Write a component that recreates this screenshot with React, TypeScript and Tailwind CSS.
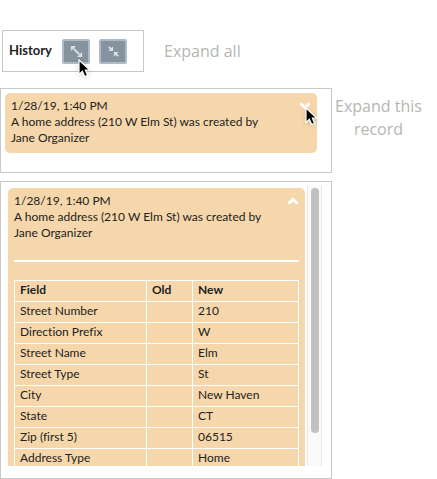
import type { ReactNode } from "react";

const rows = [
  ["Street Number", "", "210"],
  ["Direction Prefix", "", "W"],
  ["Street Name", "", "Elm"],
  ["Street Type", "", "St"],
  ["City", "", "New Haven"],
  ["State", "", "CT"],
  ["Zip (first 5)", "", "06515"],
  ["Address Type", "", "Home"],
];

function Pointer({ className }: { className: string }) {
  return (
    <svg
      className={`pointer-events-none absolute z-10 drop-shadow-sm ${className}`}
      width="13"
      height="19"
      viewBox="0 0 13 19"
      aria-hidden="true"
    >
      <path
        d="M1 1v14.5l3.4-3.2 2.3 5.3 2.9-1.2-2.2-5.2h4.6z"
        fill="#000"
        stroke="#fff"
        strokeWidth="1.2"
      />
    </svg>
  );
}

function ToolButton({ label, children }: { label: string; children: ReactNode }) {
  return (
    <button
      type="button"
      aria-label={label}
      className="flex h-[25px] w-7 items-center justify-center rounded-xs border-2 border-[#adbbc7] bg-[#86939e]"
    >
      <svg width="13" height="13" viewBox="0 0 14 14" fill="#dce2e8" stroke="#dce2e8" aria-hidden="true">
        {children}
      </svg>
    </button>
  );
}

function Chevron({ up, label }: { up?: boolean; label: string }) {
  return (
    <button type="button" aria-label={label} className="mt-1 h-2 w-3 shrink-0">
      <svg className="block" width="12" height="8" viewBox="0 0 12 8" fill="none" stroke="#fff" strokeWidth="3" aria-hidden="true">
        <path d={up ? "M1.5 6.7 6 2.3l4.5 4.4" : "M1.5 1.3 6 5.7l4.5-4.4"} />
      </svg>
    </button>
  );
}

function Summary() {
  return (
    <p className="min-w-0 flex-1">
      <span className="block">1/28/19, 1:40 PM</span>
      A home address (210 W Elm St) was created by
      <span className="block">Jane Organizer</span>
    </p>
  );
}

export default function App() {
  return (
    <main className="bg-white pt-[30px] font-['Lato','Liberation_Sans',sans-serif] text-xs text-[#222] [font-variant-ligatures:none]">
      <header className="flex items-center pl-0.5">
        <div className="flex h-[42px] w-[142px] items-center border border-[#c8c8c8] pl-1.5">
          <h1 className="w-[53px] text-[13px] font-bold">History</h1>
          <div className="relative flex gap-[9px]">
            <ToolButton label="Expand all">
              <path d="M4 4l6 6" strokeWidth="2" />
              <path d="M1 1h5.5L1 6.5zM13 13H7.5L13 7.5z" stroke="none" />
            </ToolButton>
            <ToolButton label="Collapse all">
              <path d="M2 2l3 3M12 12 9 9" strokeWidth="2" />
              <path d="M6.5 1.5v5h-5zM7.5 12.5v-5h5z" stroke="none" />
            </ToolButton>
            <Pointer className="left-4 top-5" />
          </div>
        </div>
        <span className="pl-5 font-['Open_Sans',sans-serif] text-base font-medium text-[#b3b7b1]">Expand all</span>
      </header>

      <div className="mt-4 grid grid-cols-[minmax(0,1fr)_105px] gap-y-2">
        <section className="h-[85px] border border-[#c8c8c8] py-1 pl-1 pr-3.5">
          <div className="relative flex h-[60px] rounded-[5px] bg-[#f6d7ab] py-[5px] pl-1.5 pr-1.5 leading-4">
            <Summary />
            <Chevron label="Expand this record" />
            <Pointer className="-right-px top-3.5" />
          </div>
        </section>
        <p className="pr-3 pt-[7px] text-center font-['Open_Sans',sans-serif] text-base font-medium leading-[23px] text-[#b3b7b1]">
          Expand this record
        </p>

        <section className="border border-[#c8c8c8] pb-3 pl-[7px] pr-[9px] pt-[3px]">
          <div className="flex h-[281px] overflow-hidden">
            <div className="min-w-0 flex-1 pt-[3px]">
              <article className="h-[300px] rounded-[5px] bg-[#f6d7ab] px-1.5 pt-[5px]">
                <div className="flex leading-4">
                  <Summary />
                  <Chevron up label="Collapse this record" />
                </div>
                <hr className="mb-[18px] mt-[19px] border-t-2 border-white" />
                <table className="w-full table-fixed border-collapse text-left">
                  <colgroup>
                    <col className="w-[132px]" />
                    <col className="w-[46px]" />
                    <col />
                  </colgroup>
                  <thead>
                    <tr className="h-[21px]">
                      <th className="border border-white px-[5px] pt-px align-top font-bold leading-4">Field</th>
                      <th className="border border-white px-[5px] pt-px align-top font-bold leading-4">Old</th>
                      <th className="border border-white px-[5px] pt-px align-top font-bold leading-4">New</th>
                    </tr>
                  </thead>
                  <tbody>
                    {rows.map(([field, old, value]) => (
                      <tr key={field} className="h-[21px]">
                        <td className="border border-white px-[5px] pt-px align-top leading-4">{field}</td>
                        <td className="border border-white px-[5px] pt-px align-top leading-4">{old}</td>
                        <td className="border border-white px-[5px] pt-px align-top leading-4">{value}</td>
                      </tr>
                    ))}
                  </tbody>
                </table>
              </article>
            </div>
            <div className="ml-0.5 w-[15px] border-x border-[#e8e8e8] bg-[#fafafa] px-[3px] pt-[3px]">
              <div className="h-[245px] w-2 rounded-full bg-[#c1c1c1]" />
            </div>
          </div>
        </section>
      </div>
    </main>
  );
}
